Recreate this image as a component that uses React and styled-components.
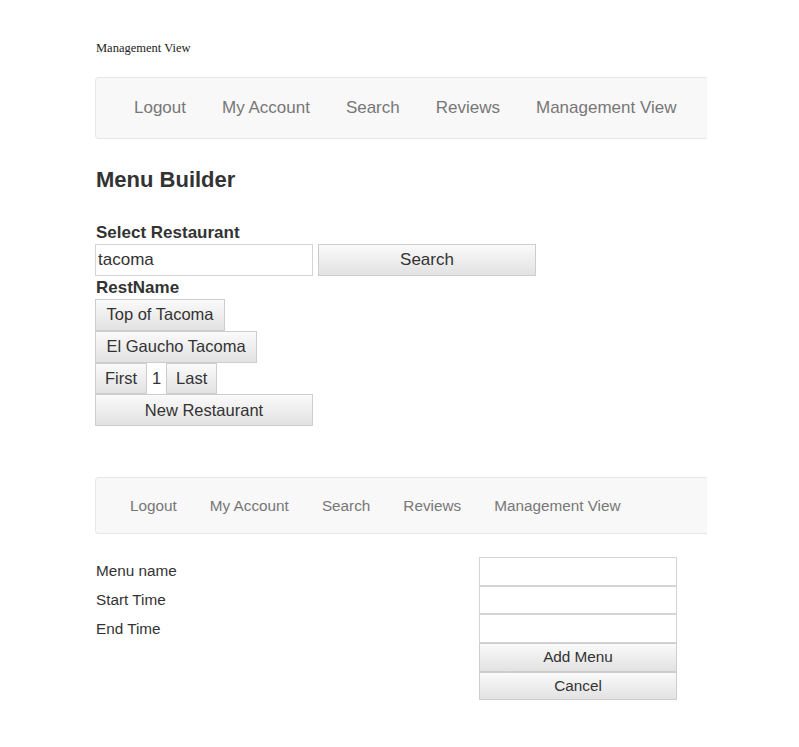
import React from "react";
import styled, { createGlobalStyle } from "styled-components";

const GlobalStyle = createGlobalStyle`
  html, body {
    margin: 0;
    padding: 0;
    background: #fff;
  }
  body {
    font-family: "Liberation Sans", Arial, sans-serif;
    color: #333;
  }
`;

const Page = styled.div`
  width: 612px;
  padding: 41px 0 40px 95px;
`;

const Crumb = styled.div`
  font-family: "Liberation Serif", "Times New Roman", serif;
  font-size: 12.5px;
  line-height: 15px;
  color: #222;
  padding-left: 1px;
  margin-bottom: 21px;
`;

const NavBar = styled.nav`
  display: flex;
  align-items: center;
  height: ${(p) => (p.$small ? 55 : 60)}px;
  padding-left: ${(p) => (p.$small ? 17.5 : 20)}px;
  background: #f8f8f8;
  border: 1px solid #e7e7e7;
  border-right: none;
  border-radius: 4px 0 0 4px;
`;

const NavLink = styled.a`
  padding: 0 ${(p) => (p.$small ? 16.5 : 18)}px;
  font-size: ${(p) => (p.$small ? 15.3 : 17)}px;
  color: #777;
  text-decoration: none;
  cursor: pointer;
`;

const Heading = styled.h2`
  margin: 29px 0 0 1px;
  font-size: 22px;
  line-height: 24px;
  font-weight: bold;
  color: #333;
`;

const Label = styled.div`
  font-size: 17px;
  font-weight: bold;
  line-height: ${(p) => p.$lh || 20}px;
  padding-left: 1px;
`;

const SearchRow = styled.div`
  display: flex;
  gap: 5px;
  height: 32px;
`;

const TextInput = styled.input`
  box-sizing: border-box;
  width: ${(p) => p.$w || 218}px;
  height: ${(p) => p.$h || 32}px;
  margin: 0;
  padding: 0 2px;
  border: 1px solid #d4d4d4;
  font-family: "Liberation Sans", Arial, sans-serif;
  font-size: 17px;
  color: #333;
  outline: none;
`;

const Button = styled.button`
  box-sizing: border-box;
  display: block;
  width: ${(p) => (p.$w ? `${p.$w}px` : "auto")};
  height: ${(p) => p.$h || 31.75}px;
  margin: 0;
  padding: 0 ${(p) => p.$px || 10.5}px;
  border: 1px solid #cdcdcd;
  border-radius: 0;
  background: linear-gradient(#fafafa, #e2e2e2);
  font-family: "Liberation Sans", Arial, sans-serif;
  font-size: ${(p) => p.$fs || 16.5}px;
  color: #333;
  text-align: center;
  cursor: pointer;
`;

const List = styled.div`
  display: flex;
  flex-direction: column;
  align-items: flex-start;
`;

const Pager = styled.div`
  display: flex;
  align-items: center;
`;

const PageNum = styled.span`
  width: 19px;
  text-align: center;
  font-size: 16.5px;
`;

const Spacer = styled.div`
  height: ${(p) => p.$h}px;
`;

const FormGrid = styled.div`
  display: grid;
  grid-template-columns: 384px 198px;
  grid-auto-rows: 28.7px;
  margin-top: 23px;
`;

const FormLabel = styled.div`
  display: flex;
  align-items: center;
  padding-left: 1px;
  font-size: 15.3px;
  color: #333;
`;

const navItems = ["Logout", "My Account", "Search", "Reviews", "Management View"];

function Nav({ small }) {
  return (
    <NavBar $small={small}>
      {navItems.map((item) => (
        <NavLink key={item} $small={small}>
          {item}
        </NavLink>
      ))}
    </NavBar>
  );
}

export default function App() {
  return (
    <>
      <GlobalStyle />
      <Page>
        <Crumb>Management View</Crumb>
        <Nav />

        <Heading>Menu Builder</Heading>
        <Spacer $h={31} />
        <Label>Select Restaurant</Label>
        <Spacer $h={1} />
        <SearchRow>
          <TextInput defaultValue="tacoma" />
          <Button $w={218} $h={32} $fs={17}>
            Search
          </Button>
        </SearchRow>
        <Label $lh={23}>RestName</Label>
        <List>
          <Button>Top of Tacoma</Button>
          <Button>El Gaucho Tacoma</Button>
          <Pager>
            <Button $px={9}>First</Button>
            <PageNum>1</PageNum>
            <Button $px={9}>Last</Button>
          </Pager>
          <Button $w={218}>New Restaurant</Button>
        </List>

        <Spacer $h={51} />
        <Nav small />

        <FormGrid>
          <FormLabel>Menu name</FormLabel>
          <TextInput $w={198} $h={28.7} />
          <FormLabel>Start Time</FormLabel>
          <TextInput $w={198} $h={28.7} />
          <FormLabel>End Time</FormLabel>
          <TextInput $w={198} $h={28.7} />
          <div />
          <Button $w={198} $h={28.7} $fs={15.3}>
            Add Menu
          </Button>
          <div />
          <Button $w={198} $h={28.7} $fs={15.3}>
            Cancel
          </Button>
        </FormGrid>
      </Page>
    </>
  );
}
